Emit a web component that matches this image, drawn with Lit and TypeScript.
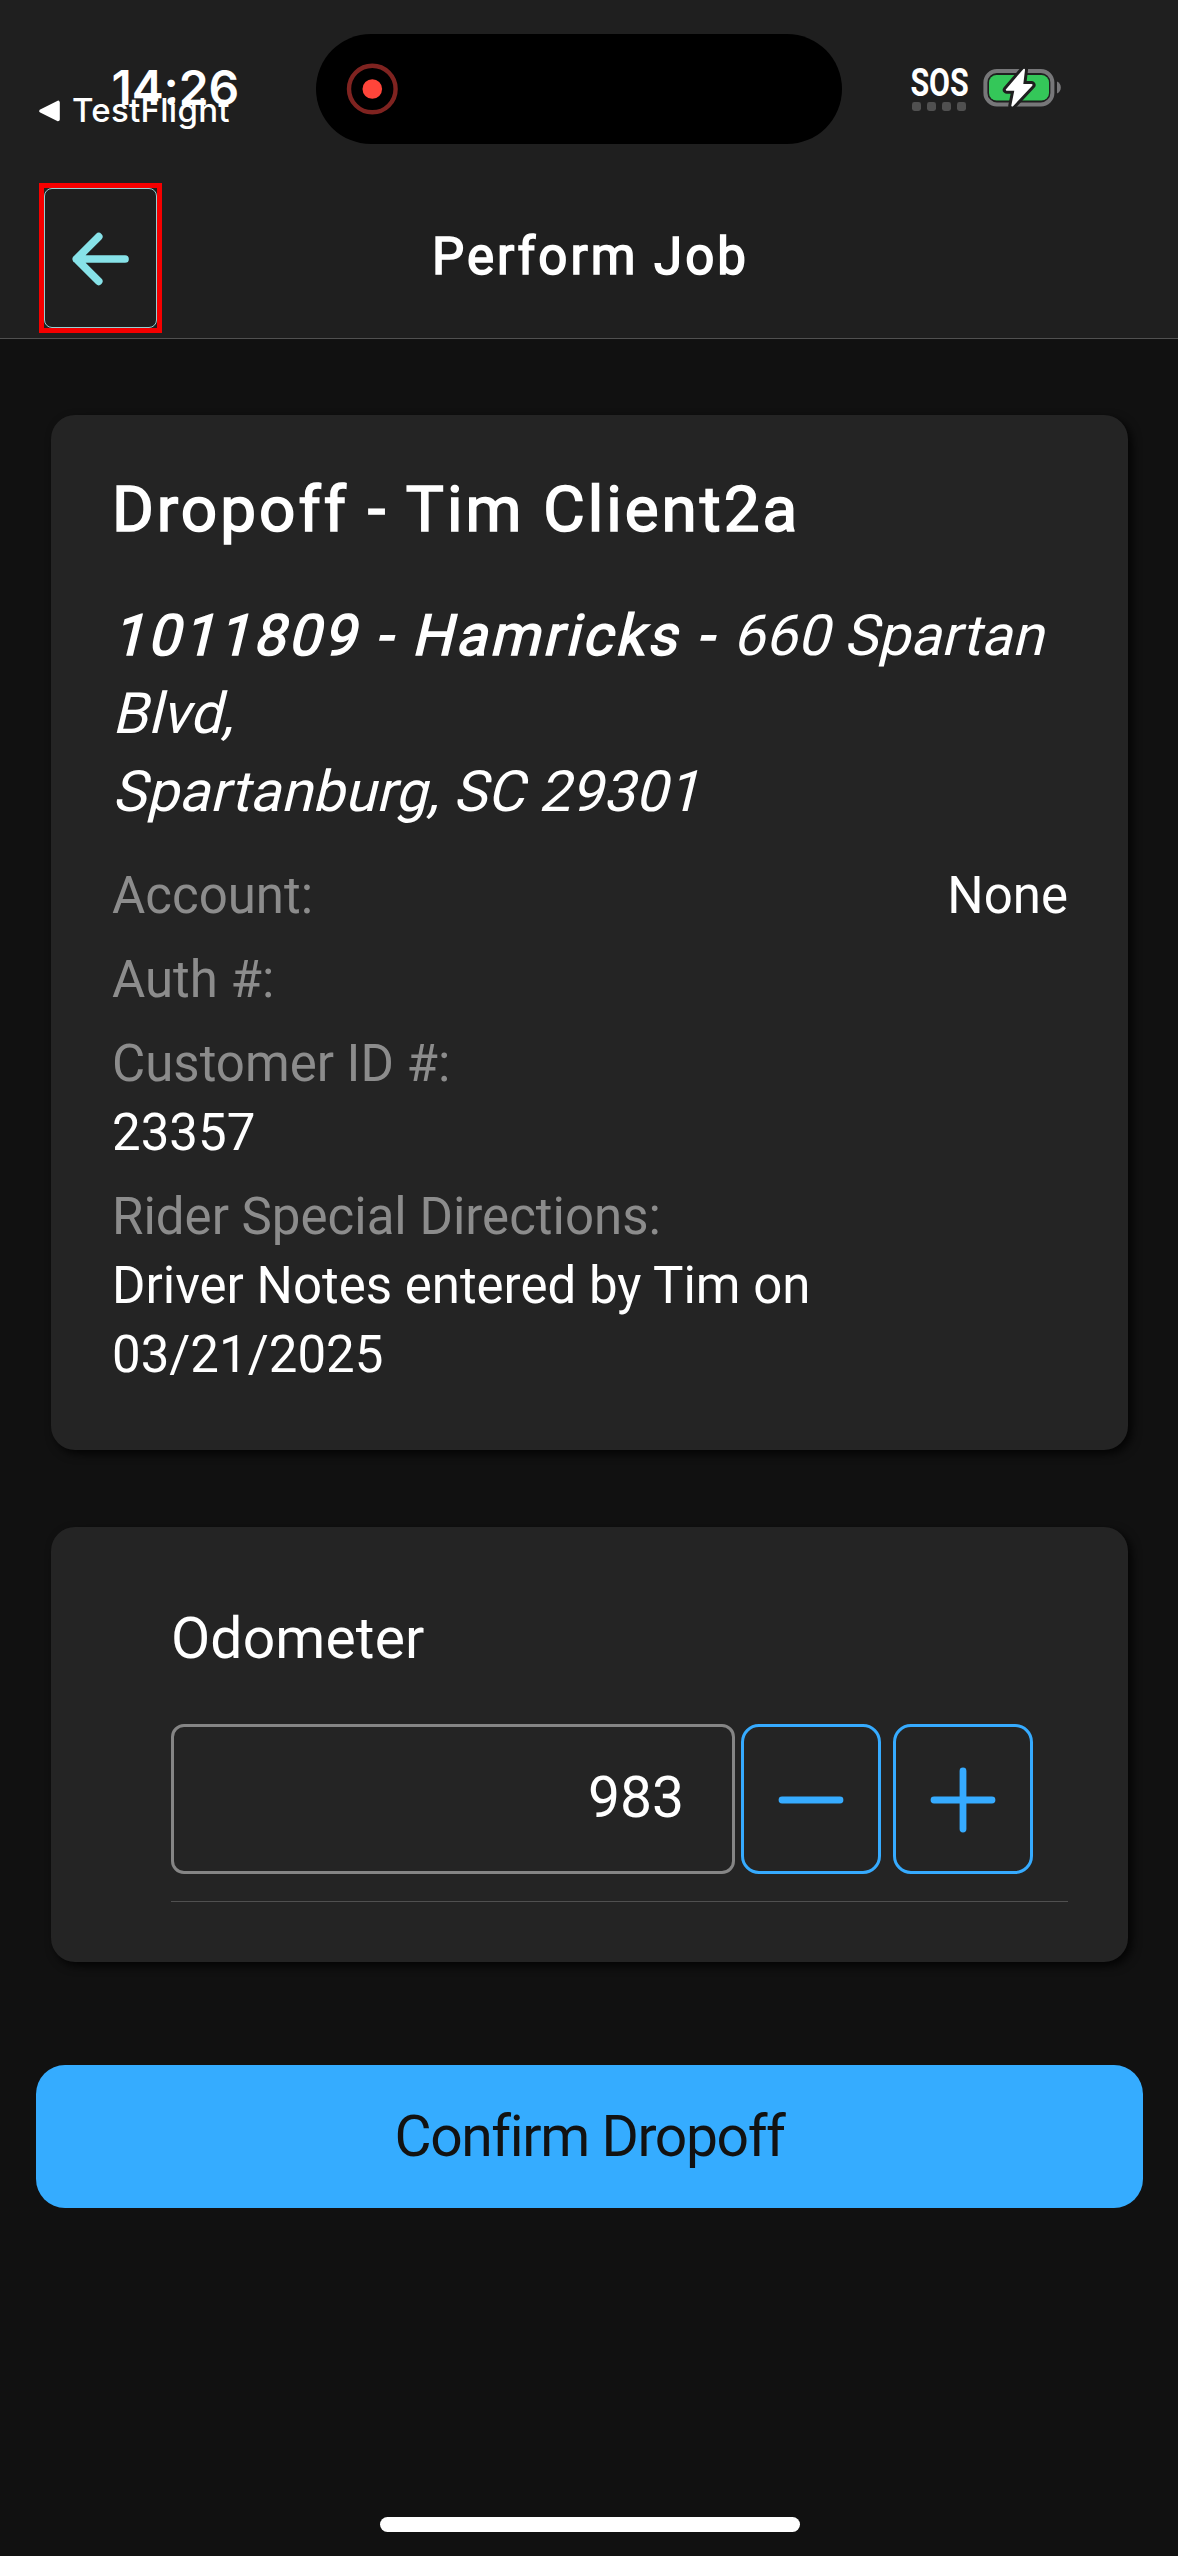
import { LitElement, html, css, nothing } from "lit";
import { customElement, property, state } from "lit/decorators.js";

@customElement("status-bar")
export class StatusBar extends LitElement {
  static styles = css`
    :host {
      display: grid;
      grid-template-columns: 316px 526px 1fr;
      height: 149px;
      padding-top: 34px;
      color: #fff;
      font-family: Inter, sans-serif;
    }
    .clock {
      position: relative;
      height: 110px;
      padding-left: 111.5px;
    }
    .time {
      font-size: 48px;
      font-weight: 600;
      line-height: 107px;
      letter-spacing: -0.1px;
    }
    .back-app {
      position: absolute;
      left: 38px;
      top: 56px;
      display: flex;
      align-items: center;
      gap: 11px;
      font-size: 33px;
      font-weight: 500;
      line-height: 41px;
      letter-spacing: 0.28px;
    }
    .island {
      display: flex;
      align-items: center;
      height: 110px;
      padding-left: 30px;
      box-sizing: border-box;
      border-radius: 55px;
      background: #000;
    }
    .signals {
      display: flex;
      align-items: flex-start;
      gap: 10px;
      padding: 22px 0 0 68px;
    }
    .battery {
      margin-top: 10px;
    }
    svg {
      display: block;
      overflow: visible;
    }
  `;

  render() {
    return html`
      <div class="clock">
        <div class="time">14:26</div>
        <div class="back-app">
          <svg width="23" height="22" viewBox="0 0 23 22">
            <path d="M3 11 20 2.5V19.5Z" fill="#fff" stroke="#fff" stroke-width="3.6" stroke-linejoin="round" />
          </svg>
          <span>TestFlight</span>
        </div>
      </div>
      <div class="island">
        <svg width="52" height="52" viewBox="0 0 52 52">
          <circle cx="26.3" cy="26" r="23.3" fill="none" stroke="#7f2320" stroke-width="4.4" />
          <circle cx="26.3" cy="26" r="9.8" fill="#ff453a" />
        </svg>
      </div>
      <div class="signals">
        <svg width="63" height="58" viewBox="0 0 63 58">
          <text
            x="0.4" y="39.5" font-family="Roboto, sans-serif" font-size="38" font-weight="700" fill="#fff"
            textLength="58.4" lengthAdjust="spacingAndGlyphs"
          >SOS</text>
          <g fill="#505050">
            <rect x="2" y="46" width="9" height="9" rx="2.4" />
            <rect x="17" y="46" width="9" height="9" rx="2.4" />
            <rect x="32" y="46" width="9" height="9" rx="2.4" />
            <rect x="47" y="46" width="9" height="9" rx="2.4" />
          </g>
        </svg>
        <svg class="battery" width="79" height="42" viewBox="0 0 79 42">
          <rect x="2.4" y="5" width="67" height="33.4" rx="11.5" fill="none" stroke="#777779" stroke-width="4" />
          <path d="M74 15.6c2.6 1 3.8 3.4 3.8 6s-1.2 5-3.8 6z" fill="#777779" />
          <rect x="6" y="9" width="60" height="25.4" rx="7.5" fill="#34c759" />
          <path
            d="M41 3.8 23.8 23.8H32.5L29.3 39.6 48.5 19H39.2Z"
            fill="#1f1f1f" stroke="#1f1f1f" stroke-width="8" stroke-linejoin="round"
          />
          <path
            d="M41 3.8 23.8 23.8H32.5L29.3 39.6 48.5 19H39.2Z"
            fill="#fff" stroke="#fff" stroke-width="2" stroke-linejoin="round"
          />
        </svg>
      </div>
    `;
  }
}

@customElement("nav-bar")
export class NavBar extends LitElement {
  @property() heading = "";

  static styles = css`
    :host {
      display: grid;
      grid-template-columns: 1fr auto 1fr;
      align-items: start;
      height: 155px;
      padding: 0 39px;
      border-bottom: 1px solid #505050;
    }
    .focus {
      justify-self: start;
      box-sizing: border-box;
      width: 123px;
      height: 150px;
      border: 5px solid #f50000;
      background: #1f1f1f;
    }
    .back {
      display: flex;
      align-items: center;
      justify-content: center;
      box-sizing: border-box;
      width: 100%;
      height: 100%;
      padding: 2px 0 0;
      border: 1.5px solid #93cfd2;
      border-radius: 8px;
      background: #1f1f1f;
    }
    h1 {
      margin: 0;
      padding-left: 3px;
      color: #fff;
      font-size: 51px;
      font-weight: 400;
      line-height: 147px;
      letter-spacing: 3px;
      white-space: nowrap;
      -webkit-text-stroke: 1.6px #fff;
    }
  `;

  render() {
    return html`
      <div class="focus">
        <button class="back" aria-label="Back">
          <svg width="58" height="56" viewBox="0 0 58 56">
            <path
              d="M26.7 5.7 4.4 28 26.7 50.3M4.4 28H53"
              fill="none" stroke="#87e2e8" stroke-width="7.7" stroke-linecap="round" stroke-linejoin="round"
            />
          </svg>
        </button>
      </div>
      <h1>${this.heading}</h1>
    `;
  }
}

interface Detail {
  label: string;
  value?: string;
  inline?: boolean;
}

@customElement("job-card")
export class JobCard extends LitElement {
  private details: Detail[] = [
    { label: "Account:", value: "None", inline: true },
    { label: "Auth #:" },
    { label: "Customer ID #:", value: "23357" },
    { label: "Rider Special Directions:", value: "Driver Notes entered by Tim on\n03/21/2025" },
  ];

  static styles = css`
    :host {
      display: block;
      padding: 56px 60px 61px 61px;
      border-radius: 24px;
      background: #242424;
      box-shadow: 4px 4px 10px rgba(0, 0, 0, 0.8);
      color: #fff;
    }
    h2 {
      margin: 0 0 48px;
      font-size: 63.8px;
      font-weight: 400;
      line-height: 78px;
      letter-spacing: 3px;
      -webkit-text-stroke: 1.6px #fff;
    }
    .address {
      margin-bottom: 30px;
      font-size: 57px;
      line-height: 78px;
      letter-spacing: 0.18px;
    }
    /* Roboto's upright letters slanted about the baseline of each line */
    .slant {
      display: flex;
      white-space: pre;
      transform: skewX(-13.5deg);
      transform-origin: 0 58.5px;
    }
    .place {
      letter-spacing: 3.1px;
      -webkit-text-stroke: 1.5px #fff;
    }
    .details {
      display: flex;
      flex-direction: column;
      gap: 15px;
      font-size: 51px;
      line-height: 69px;
    }
    .inline {
      display: flex;
      justify-content: space-between;
    }
    .label {
      color: #8c8c8c;
    }
    .value {
      white-space: pre-line;
    }
  `;

  render() {
    return html`
      <h2>Dropoff - Tim Client2a</h2>
      <div class="address">
        <div class="slant"><span class="place">1011809 - Hamricks - </span><span>660 Spartan</span></div>
        <div class="slant">Blvd,</div>
        <div class="slant">Spartanburg, SC 29301</div>
      </div>
      <div class="details">
        ${this.details.map(
          (d) => html`
            <div class=${d.inline ? "inline" : "stacked"}>
              <div class="label">${d.label}</div>
              ${d.value ? html`<div class="value">${d.value}</div>` : nothing}
            </div>
          `
        )}
      </div>
    `;
  }
}

@customElement("odometer-card")
export class OdometerCard extends LitElement {
  @state() private reading = 983;

  static styles = css`
    :host {
      display: block;
      padding: 73px 60px 60px 120px;
      border-radius: 24px;
      background: #242424;
      box-shadow: 4px 4px 10px rgba(0, 0, 0, 0.8);
      color: #fff;
      font-size: 57px;
    }
    .caption {
      margin-bottom: 46px;
      line-height: 78px;
      letter-spacing: 0.15px;
    }
    .controls {
      display: flex;
      padding-bottom: 27px;
      border-bottom: 1px solid #505050;
    }
    .field {
      box-sizing: border-box;
      width: 564px;
      height: 150px;
      padding-right: 48px;
      border: 3px solid #858585;
      border-radius: 13px;
      line-height: 142px;
      text-align: right;
    }
    .step {
      display: grid;
      place-items: center;
      box-sizing: border-box;
      width: 140px;
      height: 150px;
      margin-left: 6px;
      padding: 1px 0 0;
      border: 3px solid #36abff;
      border-radius: 18px;
      background: none;
    }
    .step + .step {
      margin-left: 12px;
    }
    svg {
      fill: none;
      stroke: #36abff;
      stroke-width: 6.8px;
      stroke-linecap: round;
    }
  `;

  render() {
    return html`
      <div class="caption">Odometer</div>
      <div class="controls">
        <div class="field">${this.reading}</div>
        <button class="step" aria-label="Decrease" @click=${() => this.reading--}>
          <svg width="66" height="66" viewBox="0 0 66 66"><path d="M4 33H62" /></svg>
        </button>
        <button class="step" aria-label="Increase" @click=${() => this.reading++}>
          <svg width="66" height="66" viewBox="0 0 66 66"><path d="M4 33H62M33 4V62" /></svg>
        </button>
      </div>
    `;
  }
}

@customElement("app-root")
export class AppRoot extends LitElement {
  static styles = css`
    :host {
      display: flex;
      flex-direction: column;
      box-sizing: border-box;
      height: 2556px;
      padding-bottom: 24px;
      background: #111;
      font-family: Roboto, sans-serif;
    }
    header {
      background: #1f1f1f;
    }
    main {
      display: flex;
      flex-direction: column;
      flex: 1;
      padding: 76px 35px 0 36px;
    }
    .card {
      margin: 0 15px 77px;
    }
    .confirm {
      height: 143px;
      margin-top: 26px;
      padding: 0;
      border: 0;
      border-radius: 29px;
      background: #35acff;
      color: #121212;
      font-family: inherit;
      font-size: 57px;
      line-height: 143px;
      letter-spacing: -1.4px;
    }
    .home {
      align-self: center;
      width: 420px;
      height: 15px;
      margin-left: 2px;
      border-radius: 7.5px;
      background: #fff;
    }
  `;

  render() {
    return html`
      <header>
        <status-bar></status-bar>
        <nav-bar heading="Perform Job"></nav-bar>
      </header>
      <main>
        <job-card class="card"></job-card>
        <odometer-card class="card"></odometer-card>
        <button class="confirm">Confirm Dropoff</button>
      </main>
      <div class="home"></div>
    `;
  }
}
